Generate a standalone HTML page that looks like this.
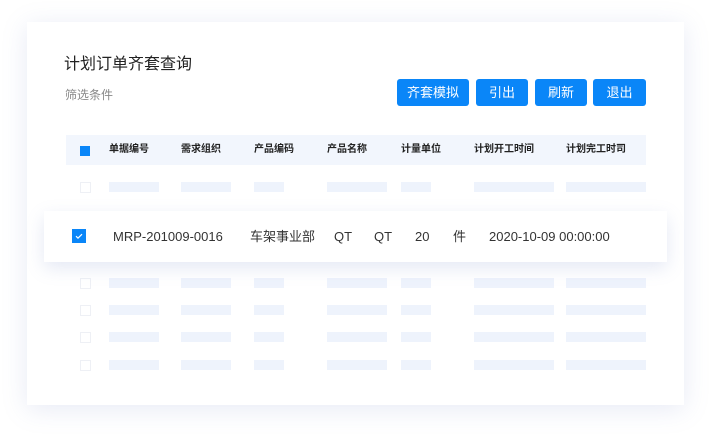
<!DOCTYPE html><html><head><meta charset="utf-8"><style>
body{margin:0;width:721px;height:446px;background:#fff;position:relative;overflow:hidden;font-family:"Liberation Sans","Noto Sans CJK SC",sans-serif}
.a{position:absolute}
.card{left:27px;top:22px;width:657px;height:383px;background:#fff;box-shadow:0 4px 24px rgba(120,140,200,.18)}
.btn{background:#0a86f8;color:#fff;font-size:13px;border-radius:3px;top:79px;height:27px;line-height:27px;text-align:center}
.bar{background:#eef3fc;height:10px}
.cb{width:9px;height:9px;border:1px solid #eef0f5;left:80px}
.h{top:143px;font-size:10px;color:#222;font-weight:bold;line-height:14px}
.d{top:229px;font-size:13px;color:#333;white-space:pre;line-height:16px}
</style></head><body>
<div class="a card"></div>
<div class="a" style="left:64px;top:50px;font-size:16px;color:#222">计划订单齐套查询</div>
<div class="a" style="left:65px;top:86px;font-size:12px;color:#888">筛选条件</div>
<div class="a btn" style="left:397px;width:72px">齐套模拟</div>
<div class="a btn" style="left:476px;width:52px">引出</div>
<div class="a btn" style="left:535px;width:52px">刷新</div>
<div class="a btn" style="left:593px;width:53px">退出</div>
<div class="a" style="left:66px;top:135px;width:580px;height:30px;background:#f2f6fd"></div>
<div class="a" style="left:80px;top:146px;width:10px;height:10px;background:#0a86f8"></div>
<div class="a h" style="left:109px">单据编号</div>
<div class="a h" style="left:181px">需求组织</div>
<div class="a h" style="left:254px">产品编码</div>
<div class="a h" style="left:327px">产品名称</div>
<div class="a h" style="left:401px">计量单位</div>
<div class="a h" style="left:474px">计划开工时间</div>
<div class="a h" style="left:566px">计划完工时司</div>
<div id="rows"></div>
<div class="a" style="left:44px;top:211px;width:623px;height:51px;background:#fff;box-shadow:0 6px 18px rgba(120,140,200,.2)"></div>
<div class="a" style="left:72px;top:229px;width:14px;height:14px;background:#0a86f8"><svg width="14" height="14"><path d="M4 7.2l2 2 4-4" stroke="#fff" stroke-width="1.2" fill="none"/></svg></div>
<div class="a d" style="left:113px">MRP-201009-0016</div>
<div class="a d" style="left:250px">车架事业部</div>
<div class="a d" style="left:334px">QT</div>
<div class="a d" style="left:374px">QT</div>
<div class="a d" style="left:415px">20</div>
<div class="a d" style="left:453px">件</div>
<div class="a d" style="left:489px">2020-10-09 00:00:00</div>
<script>
var ys=[182,278,305,332,360],cols=[[109,50],[181,50],[254,30],[327,60],[401,30],[474,80],[566,80]],h='';
ys.forEach(function(y){h+='<div class="a cb" style="top:'+(y)+'px"></div>';cols.forEach(function(c){h+='<div class="a bar" style="left:'+c[0]+'px;top:'+y+'px;width:'+c[1]+'px"></div>'})});
document.getElementById('rows').innerHTML=h;
</script>
</body></html>
